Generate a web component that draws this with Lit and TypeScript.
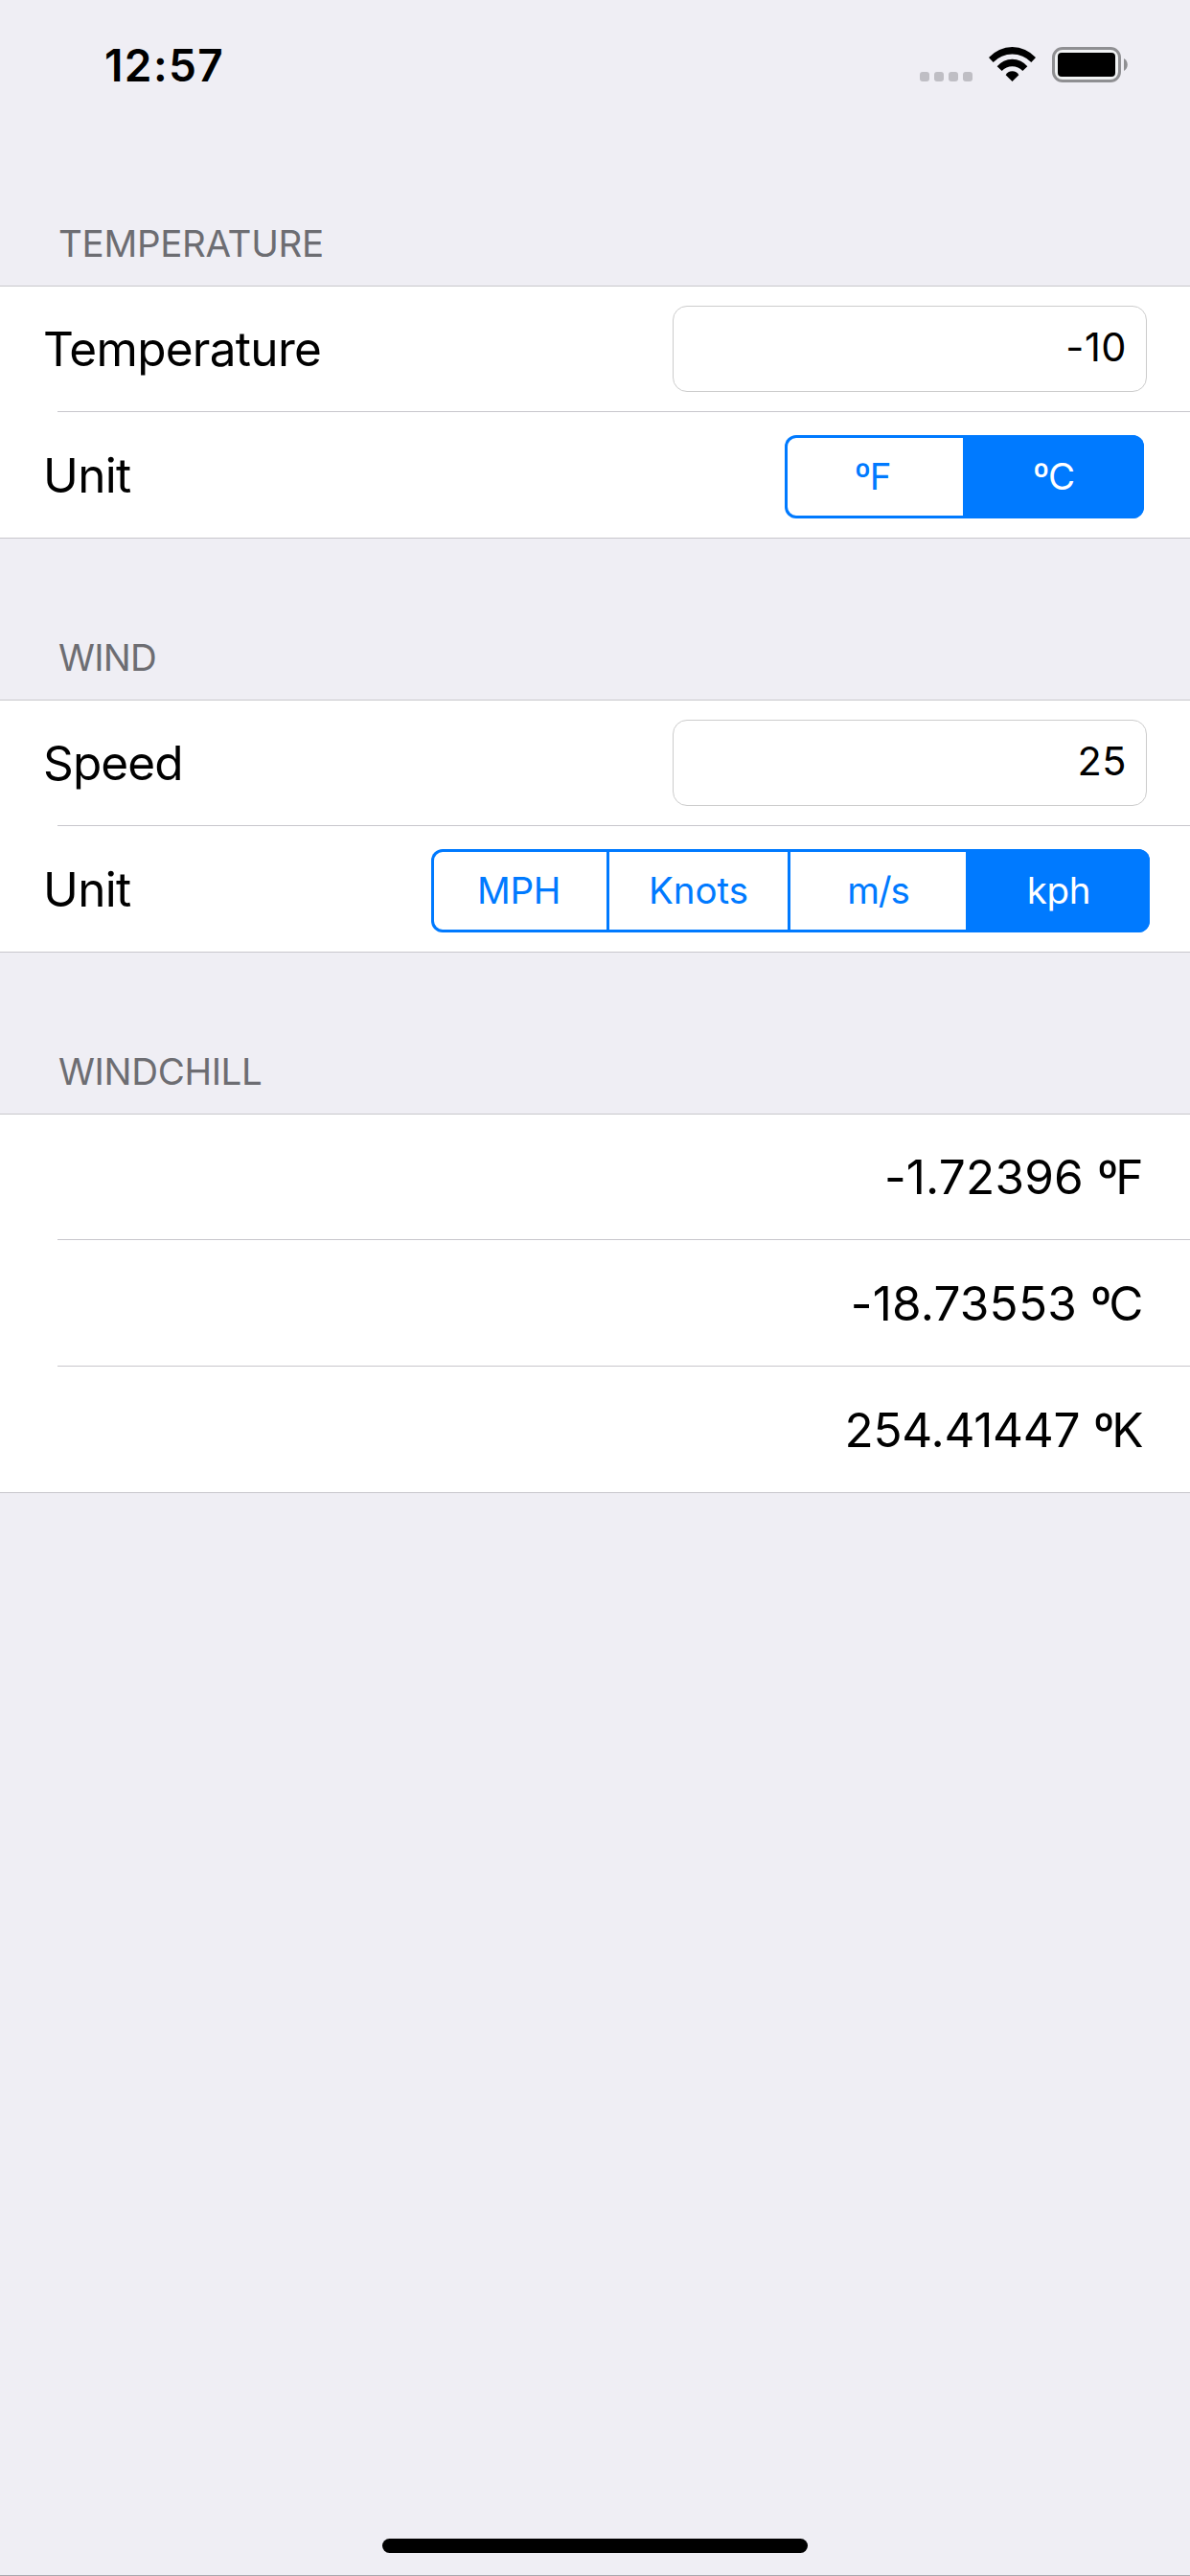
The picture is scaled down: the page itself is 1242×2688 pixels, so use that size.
import { LitElement, html, css, svg } from "lit";
import { customElement, property } from "lit/decorators.js";
import { classMap } from "lit/directives/class-map.js";
import { styleMap } from "lit/directives/style-map.js";

interface Segment {
  label: string;
  width: number;
  tracking: number;
  nudge?: number;
}

const tracked = (text: string, tracking: number) =>
  html`<span style=${styleMap({ letterSpacing: `${tracking}px` })}>${text}</span>`;

@customElement("status-bar")
export class StatusBar extends LitElement {
  static styles = css`
    :host {
      display: flex;
      justify-content: space-between;
      align-items: flex-start;
      height: 130px;
      box-sizing: border-box;
      padding: 45px 65px 0 109px;
    }
    .time {
      font-weight: 600;
      font-size: 46px;
      line-height: 46px;
      letter-spacing: 1.4px;
      color: #000;
    }
    .icons {
      display: flex;
      padding-top: 4px;
    }
    svg {
      display: block;
    }
    .wifi {
      margin: 0 17px;
    }
  `;
  render() {
    return html`
      <span class="time">12:57</span>
      <div class="icons">
        <svg width="55" height="37" viewBox="0 0 55 37" fill="#bfbec4">
          ${[0, 15, 30, 45].map((x) => svg`<rect x=${x} y="26" width="10" height="10" rx="3" />`)}
        </svg>
        <svg class="wifi" width="49" height="36" viewBox="276 57 147 108">
          <path d="M276 90A98.4 98.4 0 0 1 423 90L409 105A83 83 0 0 0 290 105Z" />
          <path d="M302 118A60.4 60.4 0 0 1 397 118L382 132A44 44 0 0 0 317 132Z" />
          <path d="M329 145A23 23 0 0 1 370 145L349.5 165Z" />
        </svg>
        <svg width="79" height="37" viewBox="0 0 79 37">
          <rect x="1.5" y="1.5" width="69" height="34" rx="9.5" fill="#f1f3f4" stroke="#8f8f92" stroke-width="3" />
          <rect x="6" y="6" width="60" height="25" rx="4" />
          <path d="M75 12C80 14.5 80 22.5 75 25Z" fill="#8f8f92" />
        </svg>
      </div>
    `;
  }
}

@customElement("segmented-control")
export class SegmentedControl extends LitElement {
  static styles = css`
    :host {
      display: flex;
      height: 87px;
      margin-top: 4px;
      border-radius: 12px;
      overflow: hidden;
      box-shadow: inset 0 0 0 3px #007aff;
    }
    .segment {
      display: flex;
      align-items: center;
      justify-content: center;
      box-sizing: border-box;
      height: 87px;
      padding-bottom: 2px;
      font-size: 38.5px;
      line-height: 46px;
      color: #007aff;
      white-space: nowrap;
    }
    .divided {
      border-right: 3px solid #007aff;
    }
    .selected {
      background: #007aff;
      color: #fff;
    }
  `;
  @property({ attribute: false }) segments: Segment[] = [];
  @property({ type: Number }) selected = 0;
  render() {
    return this.segments.map((s, i) => {
      const nudge = s.nudge ?? 0;
      return html`<div
        class=${classMap({
          segment: true,
          selected: i === this.selected,
          divided: i < this.selected - 1,
        })}
        style=${styleMap({
          width: `${s.width}px`,
          paddingLeft: `${Math.max(nudge, 0)}px`,
          paddingRight: `${Math.max(-nudge, 0)}px`,
        })}
      >
        ${tracked(s.label, s.tracking)}
      </div>`;
    });
  }
}

@customElement("app-root")
export class AppRoot extends LitElement {
  static styles = css`
    :host {
      display: flex;
      flex-direction: column;
      width: 1242px;
      height: 2688px;
      box-sizing: border-box;
      background: #efeef4;
      border-bottom: 1px solid #a9a8ae;
      font-family: Inter, "Liberation Sans", sans-serif;
      color: #000;
      overflow: hidden;
    }
    .heading {
      display: flex;
      align-items: flex-end;
      height: 168px;
      box-sizing: border-box;
      padding: 0 0 21px 61px;
      font-size: 38.5px;
      line-height: 46px;
      color: #6d6d72;
    }
    .group {
      border-top: 1px solid #c8c7cc;
      border-bottom: 1px solid #c8c7cc;
      background: #fff;
    }
    .row {
      display: flex;
      align-items: center;
      justify-content: space-between;
      height: 131px;
      box-sizing: border-box;
      padding: 0 45px;
      font-size: 49.5px;
      line-height: 60px;
      white-space: nowrap;
    }
    .row:first-child {
      height: 130px;
    }
    .separator {
      height: 1px;
      margin-left: 60px;
      background: #c8c7cc;
    }
    .segments-two {
      padding-right: 48px;
    }
    .segments-four {
      padding-right: 42px;
    }
    .result {
      justify-content: flex-end;
      padding-right: 48.5px;
    }
    .degree {
      letter-spacing: -3px;
    }
    .field {
      width: 495px;
      height: 90px;
      box-sizing: border-box;
      margin: 0;
      padding: 0 20px 4px;
      border: 1px solid #cccccc;
      border-radius: 15px;
      background: #fff;
      outline: none;
      color: #000;
      font-family: inherit;
      font-size: 41.5px;
      letter-spacing: 0.5px;
      text-align: right;
    }
    .home {
      flex: none;
      width: 444px;
      height: 15px;
      margin: auto auto 23px;
      border-radius: 8px;
      background: #000;
    }
  `;

  private tempUnits: Segment[] = [
    { label: "ºF", width: 186, tracking: -1.33, nudge: -3 },
    { label: "ºC", width: 189, tracking: -1.33 },
  ];
  private windUnits: Segment[] = [
    { label: "MPH", width: 186, tracking: -0.38 },
    { label: "Knots", width: 189, tracking: 0 },
    { label: "m/s", width: 183, tracking: -1.15 },
    { label: "kph", width: 192, tracking: -0.35, nudge: 2 },
  ];

  private result(value: string, unit: string, tracking: number) {
    return html`<div class="row result">
      <span><span style=${styleMap({ letterSpacing: `${tracking}px` })}>${value} </span><span class="degree">º</span>${unit}</span>
    </div>`;
  }

  render() {
    return html`
      <status-bar></status-bar>

      <div class="heading">${tracked("TEMPERATURE", -0.28)}</div>
      <div class="group">
        <div class="row">
          ${tracked("Temperature", -0.72)}
          <input class="field" value="-10" />
        </div>
        <div class="separator"></div>
        <div class="row segments-two">
          ${tracked("Unit", -0.69)}
          <segmented-control .segments=${this.tempUnits} .selected=${1}></segmented-control>
        </div>
      </div>

      <div class="heading">${tracked("WIND", -0.8)}</div>
      <div class="group">
        <div class="row">
          ${tracked("Speed", -0.87)}
          <input class="field" value="25" />
        </div>
        <div class="separator"></div>
        <div class="row segments-four">
          ${tracked("Unit", -0.69)}
          <segmented-control .segments=${this.windUnits} .selected=${3}></segmented-control>
        </div>
      </div>

      <div class="heading">${tracked("WINDCHILL", -0.36)}</div>
      <div class="group">
        ${this.result("-1.72396", "F", 0.17)}
        <div class="separator"></div>
        ${this.result("-18.73553", "C", 0.18)}
        <div class="separator"></div>
        ${this.result("254.41447", "K", -0.25)}
      </div>

      <div class="home"></div>
    `;
  }
}
